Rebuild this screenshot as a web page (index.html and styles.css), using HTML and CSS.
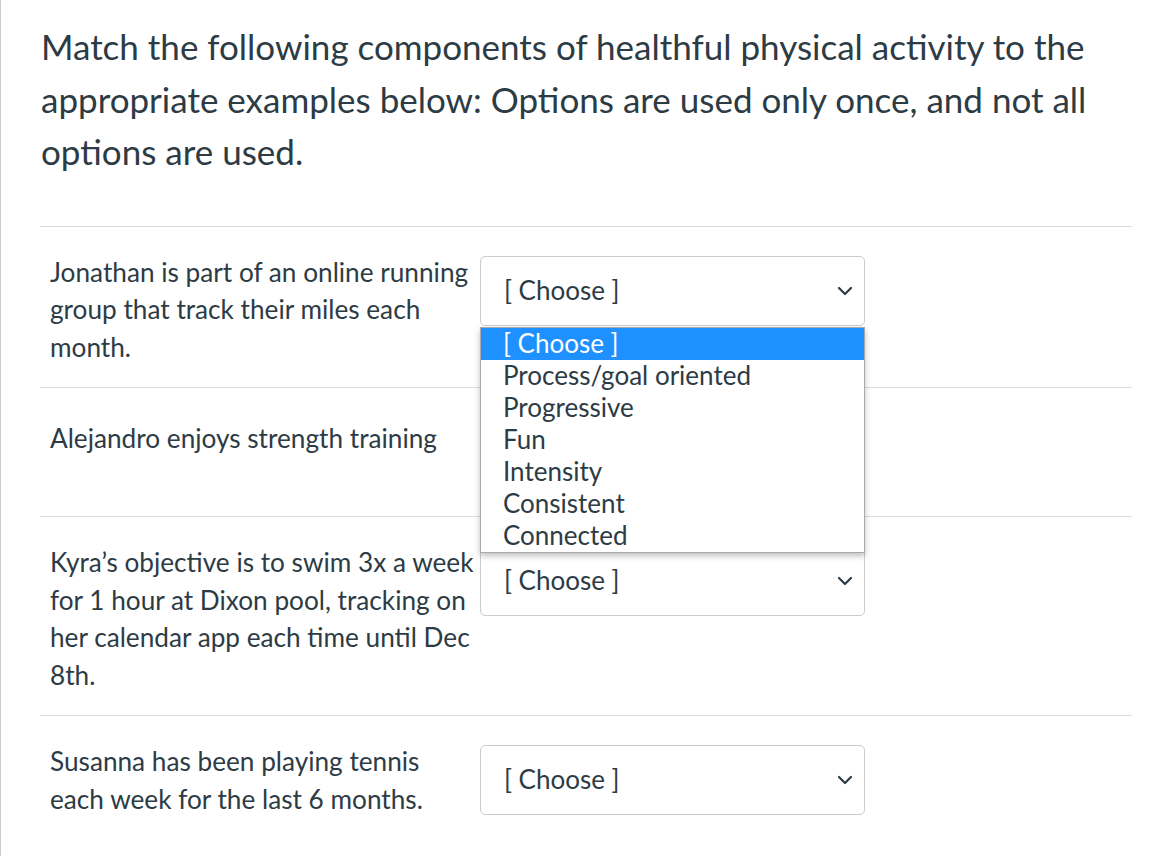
FILE: index.html
```html
<!DOCTYPE html>
<html lang="en">
<head>
<meta charset="utf-8">
<title>Matching question</title>
<link rel="stylesheet" href="styles.css">
</head>
<body>
<div class="page">
  <div class="question">
    <p class="question-text">Match the following components of healthful physical activity to the appropriate examples below: Options are used only once, and not all options are used.</p>
    <div class="answers">
      <div class="answer">
        <div class="answer-left">Jonathan is part of an online running group that track their miles each month.</div>
        <div class="answer-right">
          <div class="select">
            <span class="select-value">[ Choose ]</span>
            <svg class="chevron" width="16" height="10" viewBox="0 0 16 10"><path d="M2 2 L8 8 L14 2" fill="none" stroke="#2d3b45" stroke-width="2.2" stroke-linecap="round" stroke-linejoin="round"/></svg>
          </div>
          <ul class="dropdown">
            <li class="opt opt-active">[ Choose ]</li>
            <li class="opt">Process/goal oriented</li>
            <li class="opt">Progressive</li>
            <li class="opt">Fun</li>
            <li class="opt">Intensity</li>
            <li class="opt">Consistent</li>
            <li class="opt">Connected</li>
          </ul>
        </div>
      </div>
      <div class="answer">
        <div class="answer-left answer-left-single">Alejandro enjoys strength training</div>
        <div class="answer-right">
          <div class="select">
            <span class="select-value">[ Choose ]</span>
            <svg class="chevron" width="16" height="10" viewBox="0 0 16 10"><path d="M2 2 L8 8 L14 2" fill="none" stroke="#2d3b45" stroke-width="2.2" stroke-linecap="round" stroke-linejoin="round"/></svg>
          </div>
        </div>
      </div>
      <div class="answer">
        <div class="answer-left">Kyra’s objective is to swim 3x a week for 1 hour at Dixon pool, tracking on her calendar app each time until Dec 8th.</div>
        <div class="answer-right">
          <div class="select">
            <span class="select-value">[ Choose ]</span>
            <svg class="chevron" width="16" height="10" viewBox="0 0 16 10"><path d="M2 2 L8 8 L14 2" fill="none" stroke="#2d3b45" stroke-width="2.2" stroke-linecap="round" stroke-linejoin="round"/></svg>
          </div>
        </div>
      </div>
      <div class="answer">
        <div class="answer-left">Susanna has been playing tennis each week for the last 6 months.</div>
        <div class="answer-right">
          <div class="select">
            <span class="select-value">[ Choose ]</span>
            <svg class="chevron" width="16" height="10" viewBox="0 0 16 10"><path d="M2 2 L8 8 L14 2" fill="none" stroke="#2d3b45" stroke-width="2.2" stroke-linecap="round" stroke-linejoin="round"/></svg>
          </div>
        </div>
      </div>
    </div>
  </div>
</div>
</body>
</html>
```

FILE: styles.css
```css
html, body {
  margin: 0;
  padding: 0;
  background: #ffffff;
}

body {
  font-family: Lato, "Liberation Sans", sans-serif;
  color: #2d3b45;
}

.page {
  border-left: 1px solid #c7cdd1;
  min-height: 856px;
  box-sizing: border-box;
  padding: 20px 30px 0 39px;
}

.question-text {
  margin: 0;
  font-size: 35px;
  line-height: 52.5px;
  padding-left: 1px;
}

.answers {
  margin-top: 48px;
}

.answer {
  display: flex;
  border-top: 1px solid #d9dcdf;
  padding: 27px 0 21px 10px;
}

.answer-left {
  width: 426px;
  margin-right: 4px;
  font-size: 26.2px;
  line-height: 37.5px;
  flex: none;
}

.answer-left-single {
  padding-top: 5px;
}

.answer-right {
  position: relative;
  margin-top: 2px;
  margin-bottom: 8px;
}

.select {
  width: 385px;
  height: 70px;
  box-sizing: border-box;
  border: 1px solid #c7cdd1;
  border-radius: 5px;
  display: flex;
  align-items: center;
  justify-content: space-between;
  padding: 0 11px 0 23px;
  background: #fff;
}

.select-value {
  font-size: 26px;
  line-height: 1;
  margin-top: -2px;
}

.chevron {
  display: block;
}

.dropdown {
  position: absolute;
  top: 71px;
  left: 0;
  width: 385px;
  box-sizing: border-box;
  margin: 0;
  padding: 0;
  list-style: none;
  background: #fff;
  border: 1px solid #a9a9a9;
  box-shadow: 0 3px 6px rgba(0, 0, 0, 0.25);
  z-index: 10;
}

.opt {
  font-size: 26px;
  height: 32px;
  line-height: 30px;
  padding-left: 22px;
  white-space: nowrap;
}

.opt-active {
  background: #1e90ff;
  color: #ffffff;
}
```
